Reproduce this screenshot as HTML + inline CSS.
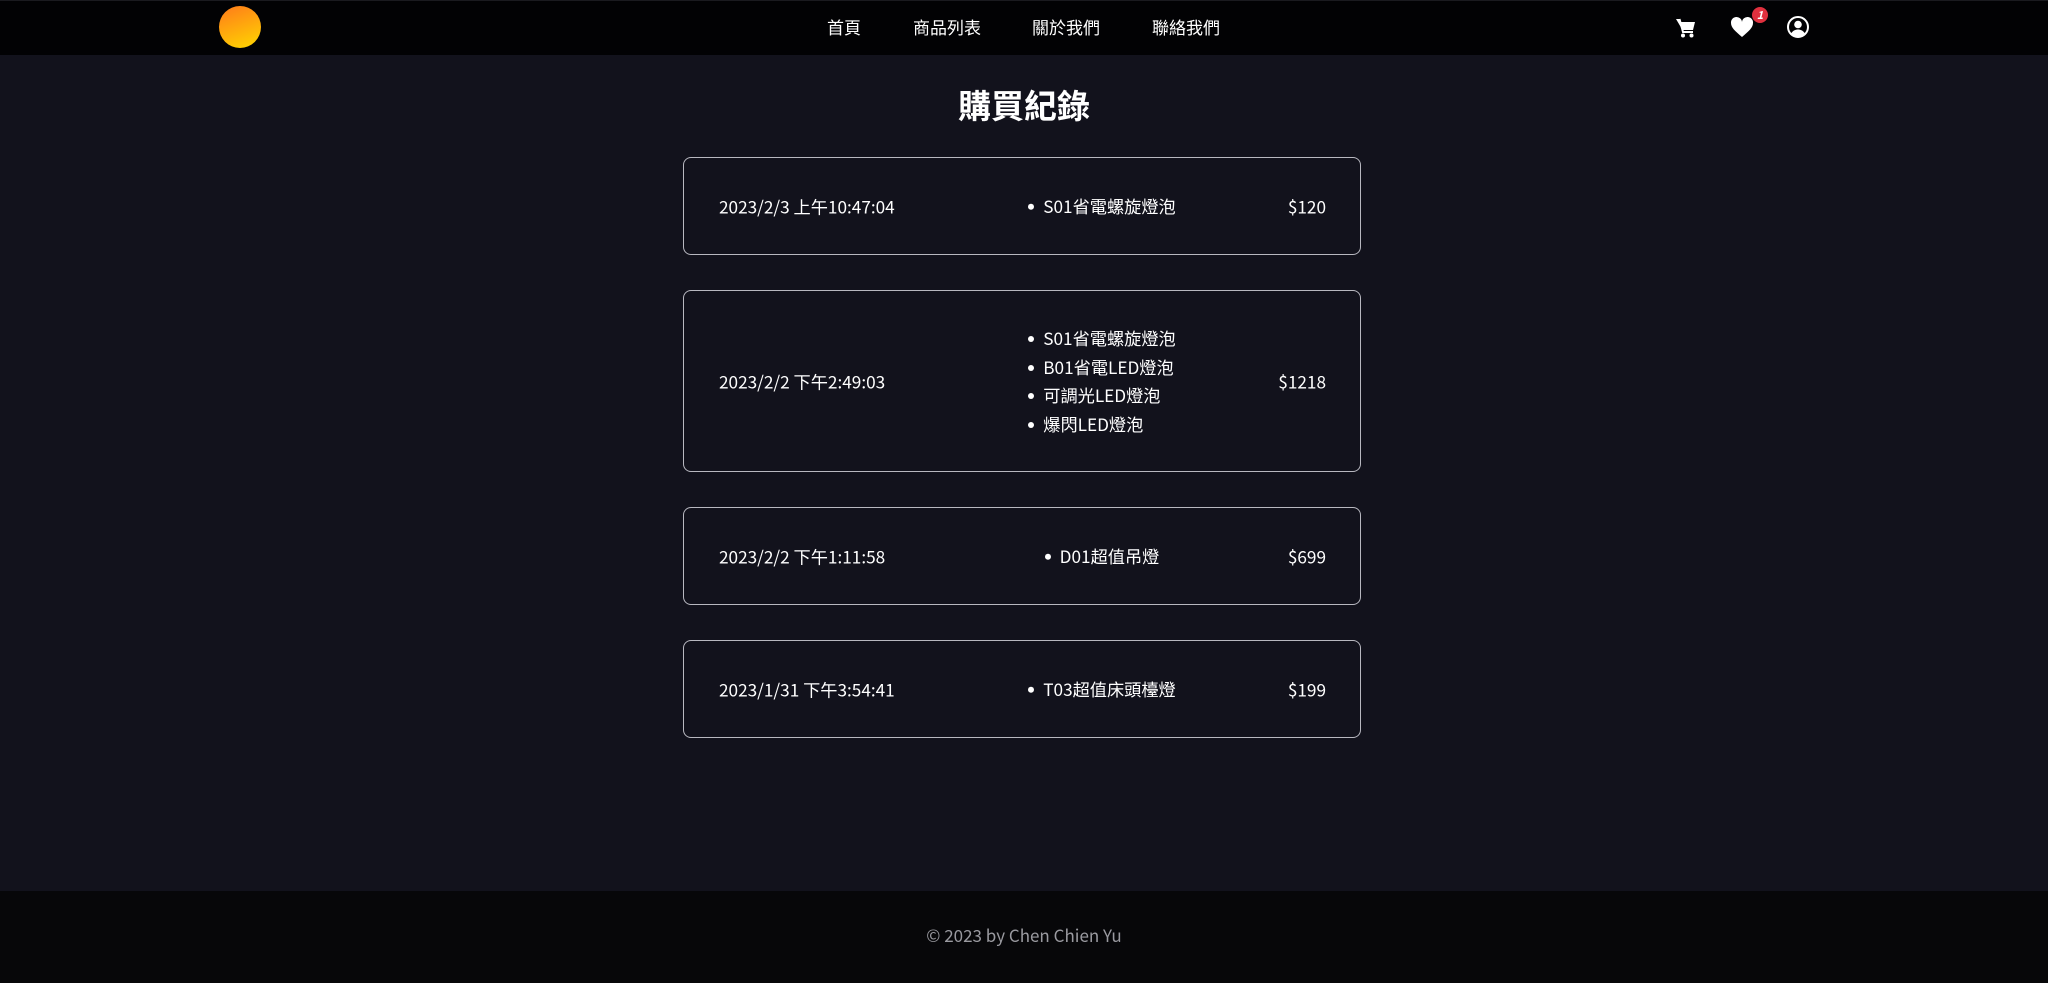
<!DOCTYPE html>
<html><head><meta charset="utf-8"><style>
*{margin:0;padding:0;box-sizing:border-box}
body{width:2048px;height:983px;background:#12121c;color:#fff;font-family:"Noto Sans CJK TC","Liberation Sans",sans-serif;position:relative;overflow:hidden}
header{position:absolute;left:0;top:0;width:2048px;height:55px;background:#020204;border-top:1px solid #1a1a1f}
.logo{position:absolute;left:219px;top:5px;width:42px;height:42px;border-radius:50%;background:linear-gradient(160deg,#ff7a1a,#ffd800)}
.nav{position:absolute;top:14px;font-size:17px;line-height:24px}
.ic{position:absolute;top:14px}
h1{position:absolute;top:80px;left:0;width:2048px;text-align:center;font-size:33px;font-weight:700;line-height:48px}
.card{position:absolute;left:683px;width:678px;border:1px solid #b8b8c0;border-radius:8px;font-size:17.2px}
.card .d{position:absolute;left:35px;top:50%;transform:translateY(-50%)}
.card .p{position:absolute;right:34px;top:50%;transform:translateY(-50%)}
.card .m{position:absolute;left:318px;width:200px;top:50%;transform:translateY(-50%);display:flex;justify-content:center}
.card ul{list-style:none;display:inline-block}
.card li{line-height:28.5px;position:relative;padding-left:15px;white-space:nowrap}
.card li:before{content:"";position:absolute;left:0;top:12px;width:6px;height:6px;border-radius:50%;background:#fff}
footer{position:absolute;left:0;top:891px;width:2048px;height:92px;background:#070709;text-align:center;color:#9a9aa0;font-size:17px;line-height:88px}
</style></head><body>
<header>
<div class="logo"></div>
<div class="nav" style="left:827px">首頁</div>
<div class="nav" style="left:913px">商品列表</div>
<div class="nav" style="left:1032px">關於我們</div>
<div class="nav" style="left:1152px">聯絡我們</div>
<svg class="ic" style="left:1675px;top:16px" width="22" height="22" viewBox="0 0 22 22"><path d="M1 2h3.5l1 3H20l-2 8H7.5z" fill="#fff"/><path d="M4.5 2l3.5 13h10" stroke="#fff" stroke-width="2" fill="none"/><circle cx="8" cy="18.5" r="2" fill="#fff"/><circle cx="16.5" cy="18.5" r="2" fill="#fff"/></svg>
<svg class="ic" style="left:1730px;top:15px" width="24" height="22" viewBox="0 0 24 22"><path d="M12 21C5 15 1 11.5 1 7a5.5 5.5 0 0 1 11-1 5.5 5.5 0 0 1 11 1c0 4.5-4 8-11 14z" fill="#fff"/></svg>
<div style="position:absolute;left:1752px;top:6px;width:16px;height:16px;border-radius:50%;background:#e0303e;color:#fff;font-size:11px;line-height:16px;text-align:center;font-style:italic;font-weight:700">1</div>
<svg class="ic" style="left:1786px;top:14px" width="24" height="24" viewBox="0 0 24 24"><circle cx="12" cy="12" r="10" stroke="#fff" stroke-width="2" fill="none"/><circle cx="12" cy="9.5" r="3.8" fill="#fff"/><path d="M5 18.5c2-3 4.5-4 7-4s5 1 7 4a9.5 9.5 0 0 1-14 0z" fill="#fff"/></svg>
</header>
<h1>購買紀錄</h1>
<div class="card" style="top:157px;height:98px"><div class="d">2023/2/3 上午10:47:04</div><div class="m"><ul><li>S01省電螺旋燈泡</li></ul></div><div class="p">$120</div></div>
<div class="card" style="top:290px;height:182px"><div class="d">2023/2/2 下午2:49:03</div><div class="m"><ul><li>S01省電螺旋燈泡</li><li>B01省電LED燈泡</li><li>可調光LED燈泡</li><li>爆閃LED燈泡</li></ul></div><div class="p">$1218</div></div>
<div class="card" style="top:507px;height:98px"><div class="d">2023/2/2 下午1:11:58</div><div class="m"><ul><li>D01超值吊燈</li></ul></div><div class="p">$699</div></div>
<div class="card" style="top:640px;height:98px"><div class="d">2023/1/31 下午3:54:41</div><div class="m"><ul><li>T03超值床頭檯燈</li></ul></div><div class="p">$199</div></div>
<footer>© 2023 by Chen Chien Yu</footer>
</body></html>
